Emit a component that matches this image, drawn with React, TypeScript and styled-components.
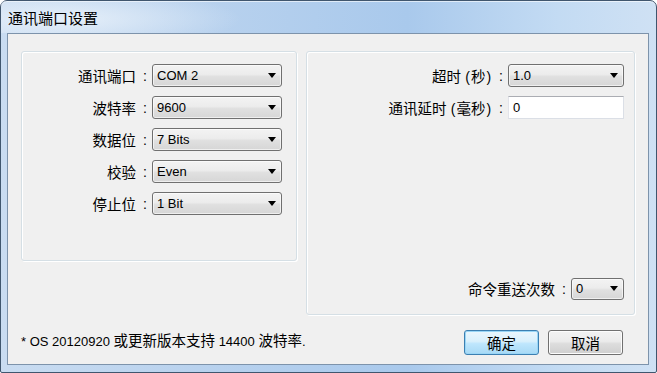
import styled, { createGlobalStyle } from "styled-components";

const GlobalStyle = createGlobalStyle`
  html, body {
    margin: 0;
    padding: 0;
    background: #ffffff;
  }
  body {
    font-family: "Liberation Sans", "Noto Sans CJK SC", sans-serif;
    font-size: 13px;
    color: #000;
  }
`;

const Window = styled.div`
  width: 657px;
  height: 373px;
  box-sizing: border-box;
  border: 1px solid #40566e;
  border-radius: 7px 7px 2px 2px;
  background: linear-gradient(
    90deg,
    #c9dcf1 0%,
    #b9d2ee 30%,
    #a9c9ec 62%,
    #c3dbf3 85%,
    #cfe1f4 100%
  );
  display: flex;
  flex-direction: column;
  padding: 0 7px 7px 6px;
  box-shadow: inset 0 1px 0 rgba(255, 255, 255, 0.6);
`;

const TitleBar = styled.div`
  height: 32px;
  display: flex;
  align-items: center;
  font-family: "Noto Sans CJK SC", sans-serif;
  font-size: 15px;
  background: radial-gradient(ellipse 180px 30px at 60px 18px, rgba(235, 243, 251, 0.85), rgba(235, 243, 251, 0));
  margin: 0 -7px 0 -6px;
  padding-left: 7px;
`;

const Client = styled.div`
  flex: 1;
  border: 1px solid #7d93ab;
  background: #f0f0f0;
  padding: 17px 13px 0 13px;
  display: flex;
  flex-direction: column;
`;

const Groups = styled.div`
  display: flex;
  justify-content: space-between;
  align-items: flex-start;
`;

const Group = styled.div<{ $w: number; $h: number }>`
  width: ${(p) => p.$w}px;
  height: ${(p) => p.$h}px;
  box-sizing: border-box;
  border: 1px solid #d5dfe5;
  border-radius: 3px;
  box-shadow: inset 1px 1px 0 #ffffff, 1px 1px 0 #ffffff;
  display: flex;
  flex-direction: column;
  gap: 9px;
`;

const LeftGroup = styled(Group)`
  padding: 12px 14px 0 0;
`;

const RightGroup = styled(Group)`
  padding: 12px 10px 14px 0;
`;

const Row = styled.div<{ $bottom?: boolean }>`
  display: flex;
  justify-content: flex-end;
  align-items: center;
  height: 23px;
  margin-top: ${(p) => (p.$bottom ? "auto" : "0")};
`;

const Label = styled.span`
  font-family: "Noto Sans CJK SC", sans-serif;
  font-size: 14.5px;
  white-space: nowrap;
`;

const Paren = styled.span`
  font-family: "Liberation Sans", sans-serif;
  font-size: 14px;
  margin: 0 1px;
`;

const Colon = styled.span`
  margin: 0 5px 0 7px;
  font-size: 14px;
`;

const Combo = styled.div<{ $w: number; $h?: number }>`
  width: ${(p) => p.$w}px;
  height: ${(p) => p.$h ?? 23}px;
  box-sizing: border-box;
  border: 1px solid #707070;
  border-radius: 3px;
  background: linear-gradient(#f3f3f3 0%, #ececec 45%, #e0e0e0 55%, #d6d6d6 100%);
  box-shadow: inset 0 0 0 1px rgba(255, 255, 255, 0.6);
  display: flex;
  align-items: center;
  justify-content: space-between;
  padding: 0 5px 0 4px;
`;

const Arrow = styled.span`
  width: 0;
  height: 0;
  border-left: 4.5px solid transparent;
  border-right: 4.5px solid transparent;
  border-top: 5px solid #000;
`;

const TextBox = styled.div<{ $w: number }>`
  width: ${(p) => p.$w}px;
  height: 23px;
  box-sizing: border-box;
  border: 1px solid #dbdfe6;
  border-top-color: #abadb3;
  border-left-color: #e2e3ea;
  background: #ffffff;
  display: flex;
  align-items: center;
  padding-left: 4px;
`;

const Footer = styled.div`
  display: flex;
  align-items: center;
  margin-top: 14px;
  padding-right: 12px;
`;

const Note = styled.span`
  padding-bottom: 5px;
  white-space: nowrap;
`;

const Cjk = styled.span`
  font-family: "Noto Sans CJK SC", sans-serif;
  font-size: 14.5px;
`;

const Buttons = styled.div`
  margin-left: auto;
  display: flex;
  gap: 9px;
`;

const Button = styled.button<{ $default?: boolean }>`
  width: 75px;
  height: 25px;
  box-sizing: border-box;
  border-radius: 3px;
  font-family: "Noto Sans CJK SC", sans-serif;
  font-size: 14.5px;
  color: #000;
  padding: 0;
  border: 1px solid ${(p) => (p.$default ? "#3c7fb1" : "#707070")};
  background: ${(p) =>
    p.$default
      ? "linear-gradient(#eaf6fd 0%, #d9f0fc 45%, #bee6fd 55%, #a7d9f5 100%)"
      : "linear-gradient(#f2f2f2 0%, #ebebeb 45%, #dddddd 55%, #cfcfcf 100%)"};
  box-shadow: ${(p) =>
    p.$default ? "inset 0 0 0 1px #9ad6f6" : "inset 0 0 0 1px #fcfcfc"};
`;

const fields = [
  { label: "通讯端口", value: "COM 2" },
  { label: "波特率", value: "9600" },
  { label: "数据位", value: "7 Bits" },
  { label: "校验", value: "Even" },
  { label: "停止位", value: "1 Bit" },
];

export default function App() {
  return (
    <>
      <GlobalStyle />
      <Window>
        <TitleBar>通讯端口设置</TitleBar>
        <Client>
          <Groups>
            <LeftGroup $w={276} $h={210}>
              {fields.map((f) => (
                <Row key={f.label}>
                  <Label>{f.label}</Label>
                  <Colon>:</Colon>
                  <Combo $w={130}>
                    <span>{f.value}</span>
                    <Arrow />
                  </Combo>
                </Row>
              ))}
            </LeftGroup>
            <RightGroup $w={329} $h={264}>
              <Row>
                <Label>
                  超时 <Paren>(</Paren>秒<Paren>)</Paren>
                </Label>
                <Colon>:</Colon>
                <Combo $w={116}>
                  <span>1.0</span>
                  <Arrow />
                </Combo>
              </Row>
              <Row>
                <Label>
                  通讯延时 <Paren>(</Paren>毫秒<Paren>)</Paren>
                </Label>
                <Colon>:</Colon>
                <TextBox $w={116}>0</TextBox>
              </Row>
              <Row $bottom>
                <Label>命令重送次数</Label>
                <Colon>:</Colon>
                <Combo $w={53} $h={22}>
                  <span>0</span>
                  <Arrow />
                </Combo>
              </Row>
            </RightGroup>
          </Groups>
          <Footer>
            <Note>
              * OS 20120920 <Cjk>或更新版本支持</Cjk> 14400 <Cjk>波特率</Cjk>.
            </Note>
            <Buttons>
              <Button $default>确定</Button>
              <Button>取消</Button>
            </Buttons>
          </Footer>
        </Client>
      </Window>
    </>
  );
}
